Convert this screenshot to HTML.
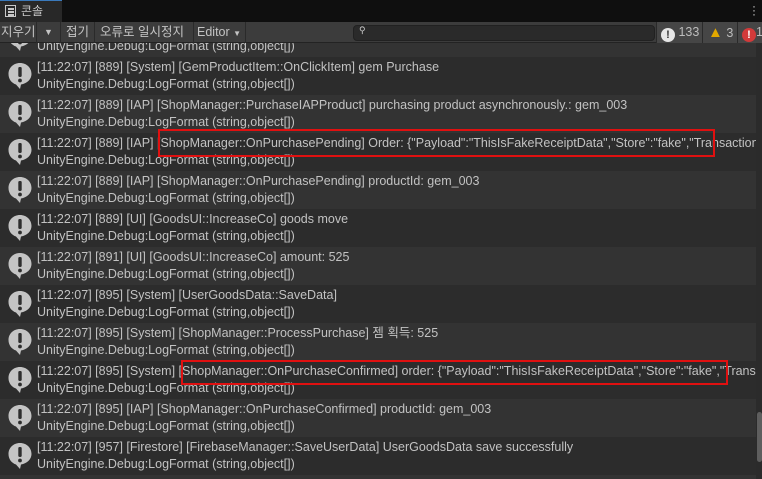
<!DOCTYPE html>
<html><head><meta charset="utf-8"><style>
*{margin:0;padding:0;box-sizing:border-box}
html{width:762px;height:479px;overflow:hidden}
body{width:762px;height:479px;overflow:hidden;background:#2c2c2c;font-family:"Liberation Sans","Noto Sans CJK KR",sans-serif;position:relative}
.tabbar{position:absolute;left:0;top:0;width:762px;height:22px;background:#0f0f0f;z-index:5}
.tab{position:absolute;left:0;top:0;width:62px;height:22px;background:#282828;border-top:1px solid #3a79bb;color:#c8c8c8;font-size:12px;line-height:21px;padding-left:21px}
.tbar{position:absolute;left:0;top:22px;width:762px;height:21px;background:#3c3c3c;border-bottom:1px solid #232323;color:#c4c4c4;font-size:12.5px;z-index:5}
.tb{position:absolute;top:0;height:21px;line-height:21px;border-right:1px solid #2a2a2a}
.search{position:absolute;left:353px;top:3px;width:302px;height:16px;background:#2a2a2a;border:1px solid #212121;border-radius:4px}
.cnt{position:absolute;top:0;height:21px;line-height:21px;background:#464646;border-left:1px solid #2a2a2a;font-size:12.5px;color:#bdbdbd}
.row{position:absolute;left:0;width:756px;height:38px;color:#c2c2c2;font-size:12.5px;line-height:17px;white-space:nowrap;overflow:hidden}
.row .t{position:absolute;left:37px;top:2px}
.row svg{position:absolute;left:7px;top:5px}
.l{background:#333333}.d{background:#2c2c2c}
.box{position:absolute;border:2px solid #e01010;z-index:3}
.ln{position:absolute;left:7px;width:8px;height:1.5px;background:#c8c8c8}
</style></head><body>
<div class="tabbar"><div class="tab"><span style="position:absolute;left:5px;top:4px;width:11px;height:12px;border:1.5px solid #c8c8c8"></span><span class="ln" style="left:7.5px;top:7px;width:6px"></span><span class="ln" style="left:7.5px;top:10px;width:6px"></span><span class="ln" style="left:7.5px;top:13px;width:6px"></span>콘솔</div>
<div style="position:absolute;right:6px;top:4px;color:#ccc;font-size:12px;line-height:4px">·<br>·<br>·</div></div>
<div class="tbar">
<div class="tb" style="left:0;width:37px;padding-left:1px">지우기</div>
<div class="tb" style="left:37px;width:24px;padding-left:7px;font-size:9px">▼</div>
<div class="tb" style="left:61px;width:34px;padding-left:5px">접기</div>
<div class="tb" style="left:95px;width:99px;padding-left:5px">오류로 일시정지</div>
<div class="tb" style="left:194px;width:52px;padding-left:3px">Editor <span style="font-size:8px">▼</span></div>
<div class="search"><span style="position:absolute;left:5px;top:-1px;font-size:9px;color:#ccc">⚲</span></div>
<div class="cnt" style="left:656px;width:46px;padding-left:4px"><span style="display:inline-block;width:14px;height:14px;border-radius:7px;background:#e6e6e6;color:#333;font-weight:bold;font-size:11px;line-height:14px;text-align:center;vertical-align:-2px">!</span> 133</div>
<div class="cnt" style="left:702px;width:35px;padding-left:5px"><span style="color:#e2a800;font-size:15px">▲</span> 3</div>
<div class="cnt" style="left:737px;width:30px;padding-left:4px"><span style="display:inline-block;width:14px;height:14px;border-radius:7px;background:#d23a3a;color:#fff;font-weight:bold;font-size:11px;line-height:14px;text-align:center;vertical-align:-2px">!</span>1</div>
</div>
<div id="rows"></div>
<div style="position:absolute;left:756px;top:43px;width:6px;height:436px;background:#2b2b2b"></div>
<div style="position:absolute;left:757px;top:412px;width:5px;height:50px;background:#5e5e5e;border-radius:3px"></div>
<div class="box" style="left:158px;top:129px;width:557px;height:28px"></div>
<div class="box" style="left:181px;top:360px;width:547px;height:25px"></div>
<script>
var L=["[11:22:07] [889] [System] [GemProductItem::OnClickItem] gem Purchase",
"[11:22:07] [889] [IAP] [ShopManager::PurchaseIAPProduct] purchasing product asynchronously.: gem_003",
"[11:22:07] [889] [IAP] [ShopManager::OnPurchasePending] Order: {\"Payload\":\"ThisIsFakeReceiptData\",\"Store\":\"fake\",\"TransactionID\"",
"[11:22:07] [889] [IAP] [ShopManager::OnPurchasePending] productId: gem_003",
"[11:22:07] [889] [UI] [GoodsUI::IncreaseCo] goods move",
"[11:22:07] [891] [UI] [GoodsUI::IncreaseCo] amount: 525",
"[11:22:07] [895] [System] [UserGoodsData::SaveData]",
"[11:22:07] [895] [System] [ShopManager::ProcessPurchase] 젬 획득: 525",
"[11:22:07] [895] [System] [ShopManager::OnPurchaseConfirmed] order: {\"Payload\":\"ThisIsFakeReceiptData\",\"Store\":\"fake\",\"TransactionID\"",
"[11:22:07] [895] [IAP] [ShopManager::OnPurchaseConfirmed] productId: gem_003",
"[11:22:07] [957] [Firestore] [FirebaseManager::SaveUserData] UserGoodsData save successfully"];
var ic='<svg width="26" height="28" viewBox="0 0 26 28"><path d="M13 1C6.4 1 1.5 5.8 1.5 12c0 5 3 9 7.5 10.5L13 27l1-4.5C20 21.5 24.5 17.3 24.5 12 24.5 5.8 19.6 1 13 1z" fill="#c4c4c4"/><rect x="11.3" y="5" width="3.4" height="10" rx="1.2" fill="#2e2e2e"/><circle cx="13" cy="18.5" r="1.9" fill="#2e2e2e"/></svg>';
var h='<div class="row l" style="top:19px">'+ic+'<div class="t">x<br>UnityEngine.Debug:LogFormat (string,object[])</div></div>';
for(var i=0;i<L.length;i++){h+='<div class="row '+(i%2?'l':'d')+'" style="top:'+(57+38*i)+'px">'+ic+'<div class="t">'+L[i].replace(/</g,'&lt;')+'<br>UnityEngine.Debug:LogFormat (string,object[])</div></div>';}
h+='<div class="row l" style="top:475px;height:4px"></div>';
document.getElementById('rows').innerHTML=h;
</script>
</body></html>
